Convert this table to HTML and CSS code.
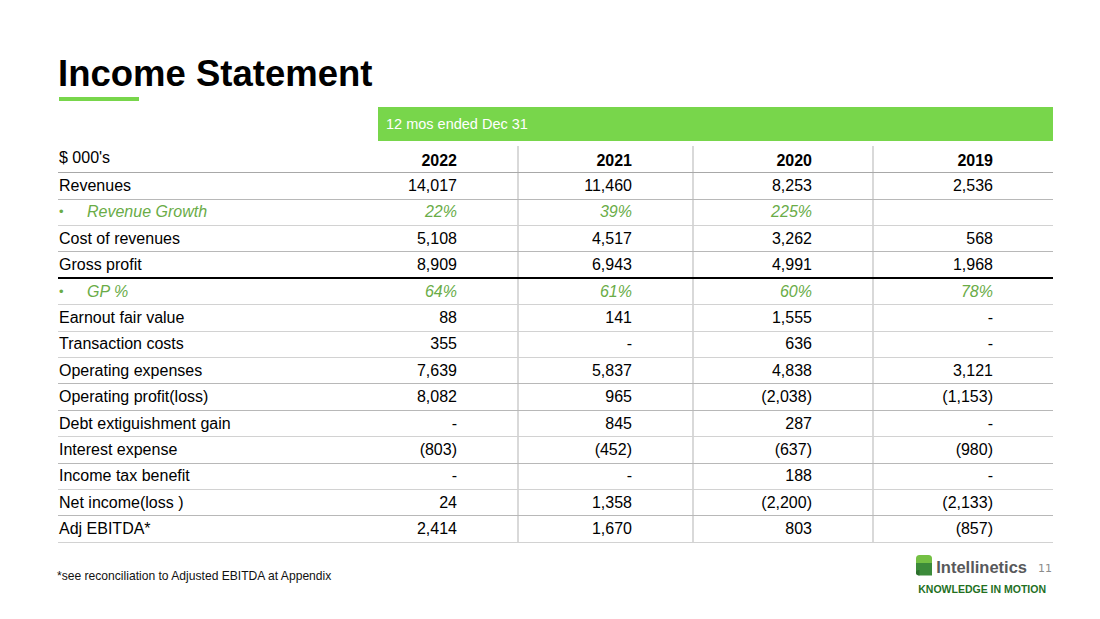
FILE: index.html
```html
<!DOCTYPE html>
<html lang="en">
<head>
<meta charset="utf-8">
<title>Income Statement</title>
<link rel="stylesheet" href="styles.css">
</head>
<body>
<div class="slide">
  <h1 class="title">Income Statement</h1>
  <div class="accent"></div>

  <div class="table">
    <div class="period">12 mos ended Dec 31</div>

    <div class="row head">
      <div class="lbl">$ 000's</div>
      <div class="v">2022</div>
      <div class="v sep">2021</div>
      <div class="v sep">2020</div>
      <div class="v sep">2019</div>
    </div>

    <div class="row">
      <div class="lbl">Revenues</div>
      <div class="v">14,017</div>
      <div class="v sep">11,460</div>
      <div class="v sep">8,253</div>
      <div class="v sep">2,536</div>
    </div>
    <div class="row pct light">
      <div class="lbl"><span class="dot">•</span>Revenue Growth</div>
      <div class="v">22%</div>
      <div class="v sep">39%</div>
      <div class="v sep">225%</div>
      <div class="v sep"></div>
    </div>
    <div class="row">
      <div class="lbl">Cost of revenues</div>
      <div class="v">5,108</div>
      <div class="v sep">4,517</div>
      <div class="v sep">3,262</div>
      <div class="v sep">568</div>
    </div>
    <div class="row strong">
      <div class="lbl">Gross profit</div>
      <div class="v">8,909</div>
      <div class="v sep">6,943</div>
      <div class="v sep">4,991</div>
      <div class="v sep">1,968</div>
    </div>
    <div class="row pct light">
      <div class="lbl"><span class="dot">•</span>GP %</div>
      <div class="v">64%</div>
      <div class="v sep">61%</div>
      <div class="v sep">60%</div>
      <div class="v sep">78%</div>
    </div>
    <div class="row light">
      <div class="lbl">Earnout fair value</div>
      <div class="v">88</div>
      <div class="v sep">141</div>
      <div class="v sep">1,555</div>
      <div class="v sep">-</div>
    </div>
    <div class="row light">
      <div class="lbl">Transaction costs</div>
      <div class="v">355</div>
      <div class="v sep">-</div>
      <div class="v sep">636</div>
      <div class="v sep">-</div>
    </div>
    <div class="row">
      <div class="lbl">Operating expenses</div>
      <div class="v">7,639</div>
      <div class="v sep">5,837</div>
      <div class="v sep">4,838</div>
      <div class="v sep">3,121</div>
    </div>
    <div class="row">
      <div class="lbl">Operating profit(loss)</div>
      <div class="v">8,082</div>
      <div class="v sep">965</div>
      <div class="v sep">(2,038)</div>
      <div class="v sep">(1,153)</div>
    </div>
    <div class="row light">
      <div class="lbl">Debt extiguishment gain</div>
      <div class="v">-</div>
      <div class="v sep">845</div>
      <div class="v sep">287</div>
      <div class="v sep">-</div>
    </div>
    <div class="row">
      <div class="lbl">Interest expense</div>
      <div class="v">(803)</div>
      <div class="v sep">(452)</div>
      <div class="v sep">(637)</div>
      <div class="v sep">(980)</div>
    </div>
    <div class="row light">
      <div class="lbl">Income tax benefit</div>
      <div class="v">-</div>
      <div class="v sep">-</div>
      <div class="v sep">188</div>
      <div class="v sep">-</div>
    </div>
    <div class="row">
      <div class="lbl">Net income(loss )</div>
      <div class="v">24</div>
      <div class="v sep">1,358</div>
      <div class="v sep">(2,200)</div>
      <div class="v sep">(2,133)</div>
    </div>
    <div class="row light">
      <div class="lbl">Adj EBITDA*</div>
      <div class="v">2,414</div>
      <div class="v sep">1,670</div>
      <div class="v sep">803</div>
      <div class="v sep">(857)</div>
    </div>
  </div>

  <div class="footer">
    <p class="note">*see reconciliation to Adjusted EBITDA at Appendix</p>
    <div class="brand">
      <div class="brand-top">
        <svg class="logo-icon" width="18" height="23" viewBox="0 0 18 23" aria-hidden="true">
          <path d="M1 9 V4.5 Q1 1 4.5 1 H13.5 Q17 1 17 4.5 V9 Z" fill="#74c044"/>
          <path d="M1 9 H17 V21.5 H4.5 Q1 21.5 1 18.5 Z" fill="#3c8b3a"/>
          <path d="M1 18.5 Q1 16 3.8 16 H4.5 V21.5 Q1 21.5 1 18.5 Z" fill="#2d6f2c"/>
        </svg>
        <span class="brand-name">Intellinetics</span>
        <span class="page-no">11</span>
      </div>
      <div class="tagline">KNOWLEDGE IN MOTION</div>
    </div>
  </div>
</div>
</body>
</html>
```

FILE: styles.css
```css
* {
  box-sizing: border-box;
}

html, body {
  margin: 0;
  padding: 0;
  background: #ffffff;
}

body {
  font-family: "Liberation Sans", Arial, sans-serif;
  color: #000000;
}

.slide {
  width: 1100px;
  height: 619px;
  padding: 56px 47px 0 58px;
  display: flex;
  flex-direction: column;
  overflow: hidden;
}

.title {
  margin: 0;
  font-size: 36.5px;
  line-height: 36px;
  font-weight: 700;
  color: #000000;
}

.accent {
  width: 80px;
  height: 4px;
  margin: 5px 0 0 1px;
  background: #78d64b;
}

.table {
  width: 995px;
  margin-top: 6px;
  display: flex;
  flex-direction: column;
}

.period {
  margin-left: 320px;
  height: 34px;
  background: #78d64b;
  color: #ffffff;
  font-size: 14.5px;
  padding-left: 8px;
  display: flex;
  align-items: center;
}

.row {
  display: grid;
  grid-template-columns: 300px 159px 175px 180px 181px;
  height: 26.4px;
  border-bottom: 1px solid #b8b8b8;
  font-size: 16px;
  line-height: 18px;
}

.row.light {
  border-bottom-color: #d2d2d2;
}

.row.strong {
  border-bottom: 2px solid #000000;
}

.row > div {
  display: flex;
  align-items: center;
  white-space: nowrap;
}

.lbl {
  padding-left: 1px;
}

.v {
  justify-content: flex-end;
  padding-right: 60px;
}

.sep {
  border-left: 2px solid #d9d9d9;
}

.row.head {
  height: 32.3px;
  border-bottom-color: #a8a8a8;
}

.row.head > div {
  margin-top: 5px;
  align-items: flex-start;
}

.row.head .lbl {
  padding-top: 3px;
}

.row.head .v {
  padding-top: 6px;
  font-weight: 700;
}

.row.pct {
  color: #6aac47;
  font-style: italic;
}

.dot {
  font-style: normal;
  font-size: 13px;
  width: 28px;
  display: inline-block;
}

.footer {
  display: flex;
  justify-content: space-between;
  align-items: flex-start;
  margin-top: 12px;
}

.note {
  margin: 14px 0 0 -1px;
  font-size: 12.1px;
  line-height: 14px;
  color: #111111;
}

.brand {
  display: flex;
  flex-direction: column;
  margin-right: 1px;
}

.brand-top {
  display: flex;
  align-items: flex-start;
}

.logo-icon {
  display: block;
  margin-top: -1px;
}

.brand-name {
  margin-left: 3px;
  margin-top: 2px;
  font-size: 16.5px;
  line-height: 20px;
  font-weight: 700;
  color: #58595b;
}

.page-no {
  margin-left: 11px;
  margin-top: 7px;
  font-family: "DejaVu Sans", sans-serif;
  font-size: 11px;
  line-height: 13px;
  color: #8c8c8c;
}

.tagline {
  margin: 6px 0 0 3px;
  font-size: 10.5px;
  line-height: 12px;
  font-weight: 700;
  color: #24701f;
  white-space: nowrap;
}
```
